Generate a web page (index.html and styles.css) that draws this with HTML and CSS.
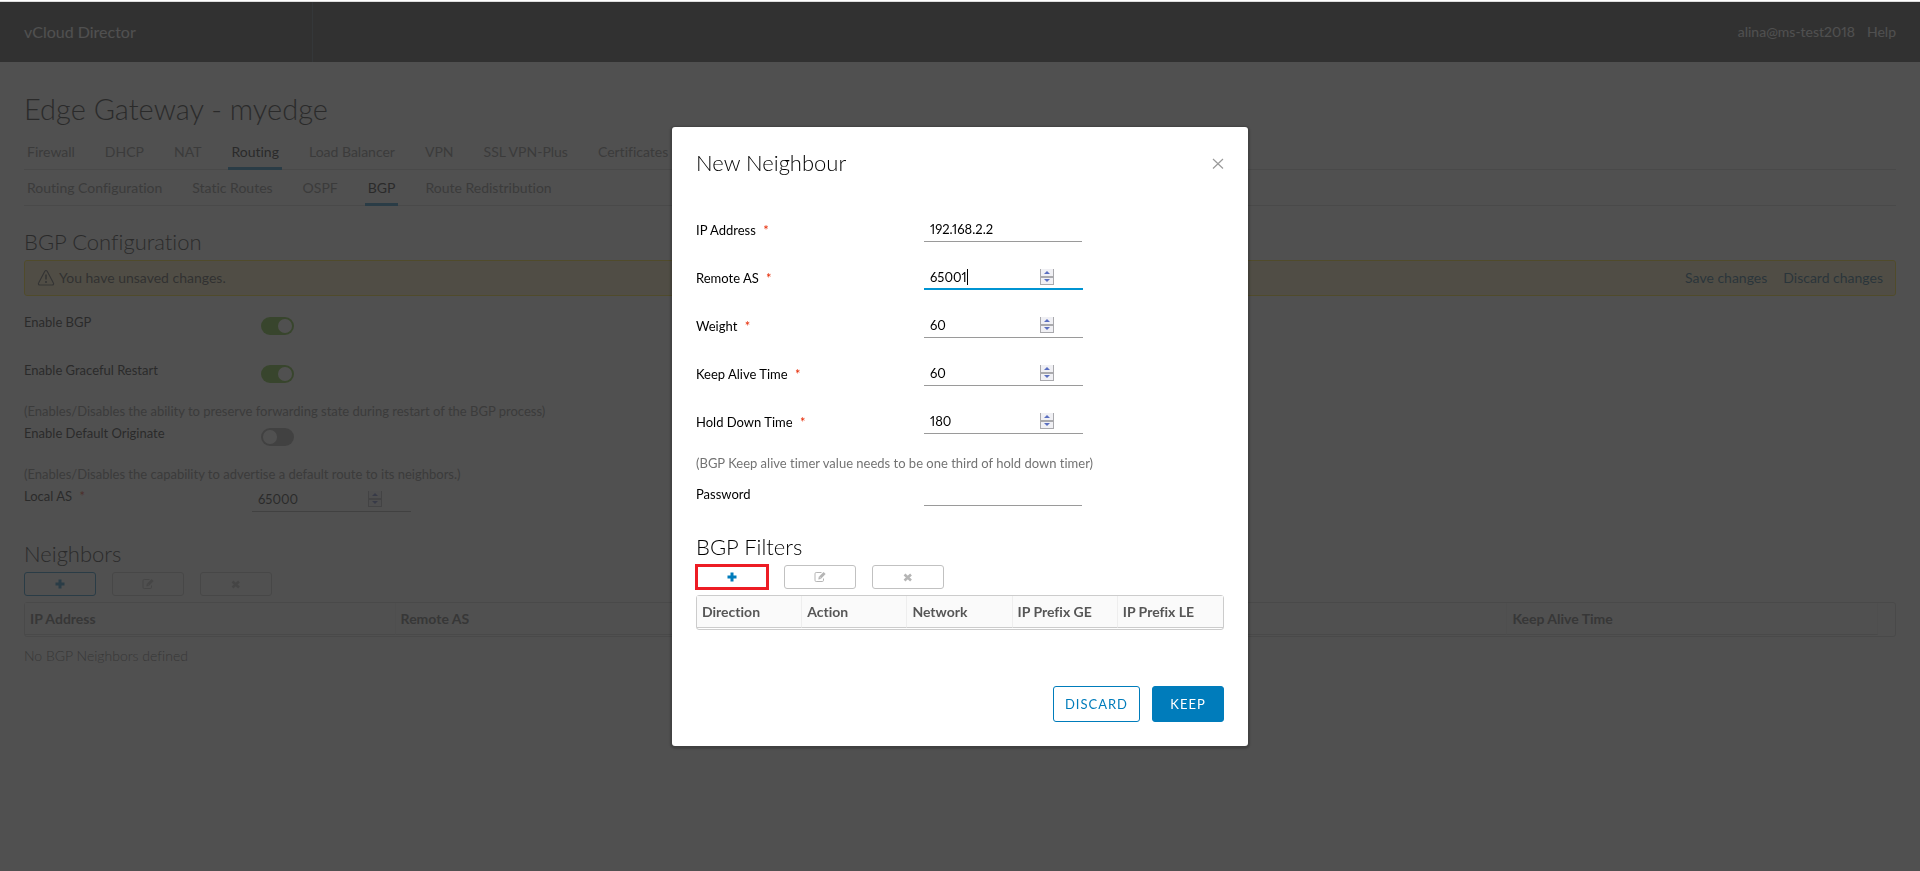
FILE: index.html
```html
<!DOCTYPE html>
<html lang="en">
  <head>
    <meta charset="utf-8">
    <title>vCloud Director</title>
    <link rel="stylesheet" href="styles.css">
  </head>
  <body>
    <svg class="sprite" aria-hidden="true">
      <symbol id="icon-plus" viewBox="0 0 12 12">
        <path d="M4.500 1.500h3v3h3v3h-3v3h-3v-3h-3v-3h3z" fill="currentColor"/>
      </symbol>
      <symbol id="icon-edit" viewBox="0 0 12 12">
        <path d="M7.500 1.500H2.200A1.200 1.200 0 0 0 1 2.700v6.600a1.200 1.200 0 0 0 1.200 1.200h6.100a1.200 1.200 0 0 0 1.200-1.200V7.500" fill="none" stroke="currentColor"/>
        <path d="M4.300 8.500l.5-2.700L9.600 1l2 2-4.800 4.900z" fill="currentColor"/>
        <path d="M5.600 6l1.200 1.200" stroke="#fff" stroke-width=".7"/>
      </symbol>
      <symbol id="icon-remove" viewBox="0 0 12 12">
        <path d="M2.500 3.500l6.500 6M9 3.500l-6.500 6" stroke="currentColor" stroke-width="2.600"/>
      </symbol>
    </svg>

    <header class="header">
      <div class="brand">vCloud Director</div>
      <div class="header-links">
        <a href="#">alina@ms-test2018</a>
        <a href="#">Help</a>
      </div>
    </header>

    <main class="content">
      <h1>Edge Gateway - myedge</h1>
      <nav class="tabs">
        <a href="#">Firewall</a>
        <a href="#">DHCP</a>
        <a href="#">NAT</a>
        <a href="#" class="active">Routing</a>
        <a href="#">Load Balancer</a>
        <a href="#">VPN</a>
        <a href="#">SSL VPN-Plus</a>
        <a href="#">Certificates</a>
      </nav>
      <nav class="tabs">
        <a href="#">Routing Configuration</a>
        <a href="#">Static Routes</a>
        <a href="#">OSPF</a>
        <a href="#" class="active">BGP</a>
        <a href="#">Route Redistribution</a>
      </nav>

      <h2 class="config-title">BGP Configuration</h2>
      <div class="alert">
        <svg class="alert-icon" viewBox="0 0 18 18">
          <path d="M7.800 2.200L1.600 14a1.300 1.300 0 0 0 1.200 2h12.400a1.300 1.300 0 0 0 1.200-2L10.200 2.200a1.400 1.400 0 0 0-2.400 0z" fill="none" stroke="currentColor" stroke-width="1.200"/>
          <path d="M9 5.500v5M9 12v2" stroke="currentColor" stroke-width="1.600"/>
        </svg>
        <span class="alert-text">You have unsaved changes.</span>
        <a href="#">Save changes</a>
        <a href="#">Discard changes</a>
      </div>

      <form class="config">
        <div class="config-row">
          <label for="enable-bgp">Enable BGP</label>
          <input type="checkbox" class="toggle" id="enable-bgp" checked>
        </div>
        <div class="config-row">
          <label for="graceful">Enable Graceful Restart</label>
          <input type="checkbox" class="toggle" id="graceful" checked>
        </div>
        <p class="config-hint">(Enables/Disables the ability to preserve forwarding state during restart of the BGP process)</p>
        <div class="config-row">
          <label for="originate">Enable Default Originate</label>
          <input type="checkbox" class="toggle" id="originate">
        </div>
        <p class="config-hint">(Enables/Disables the capability to advertise a default route to its neighbors.)</p>
        <div class="config-row">
          <label for="local-as">Local AS <span class="required">*</span></label>
          <div class="field number">
            <input type="number" id="local-as" value="65000">
            <span class="spinner"><button type="button" class="up" aria-label="Increase"></button><button type="button" class="down" aria-label="Decrease"></button></span>
          </div>
        </div>
      </form>

      <h2 class="neighbors-title">Neighbors</h2>
      <div class="toolbar">
        <button class="tool add" aria-label="Add"><svg><use href="#icon-plus"/></svg></button>
        <button class="tool" aria-label="Edit" disabled><svg><use href="#icon-edit"/></svg></button>
        <button class="tool" aria-label="Remove" disabled><svg><use href="#icon-remove"/></svg></button>
      </div>
      <div class="grid">
        <table>
          <thead>
            <tr><th>IP Address</th><th>Remote AS</th><th>Weight</th><th>Hold Down Time</th><th>Keep Alive Time</th><td class="gutter"></td></tr>
          </thead>
        </table>
      </div>
      <p class="empty">No BGP Neighbors defined</p>
    </main>

    <div class="backdrop">
      <div class="modal" role="dialog" aria-labelledby="modal-title">
        <div class="modal-header">
          <h2 id="modal-title">New Neighbour</h2>
          <button class="close" aria-label="Close">
            <svg viewBox="0 0 12 12"><path d="M1 2l10 9.500M11 2L1 11.500" stroke="currentColor" stroke-width="1.200"/></svg>
          </button>
        </div>
        <form class="modal-form">
          <div class="form-row">
            <label for="ip">IP Address <span class="required">*</span></label>
            <div class="field"><input type="text" id="ip" value="192.168.2.2"></div>
          </div>
          <div class="form-row">
            <label for="remote-as">Remote AS <span class="required">*</span></label>
            <div class="field number focused">
              <input type="number" id="remote-as" value="65001">
              <span class="caret"></span>
              <span class="spinner"><button type="button" class="up" aria-label="Increase"></button><button type="button" class="down" aria-label="Decrease"></button></span>
            </div>
          </div>
          <div class="form-row">
            <label for="weight">Weight <span class="required">*</span></label>
            <div class="field number">
              <input type="number" id="weight" value="60">
              <span class="spinner"><button type="button" class="up" aria-label="Increase"></button><button type="button" class="down" aria-label="Decrease"></button></span>
            </div>
          </div>
          <div class="form-row">
            <label for="keep-alive">Keep Alive Time <span class="required">*</span></label>
            <div class="field number">
              <input type="number" id="keep-alive" value="60">
              <span class="spinner"><button type="button" class="up" aria-label="Increase"></button><button type="button" class="down" aria-label="Decrease"></button></span>
            </div>
          </div>
          <div class="form-row">
            <label for="hold-down">Hold Down Time <span class="required">*</span></label>
            <div class="field number">
              <input type="number" id="hold-down" value="180">
              <span class="spinner"><button type="button" class="up" aria-label="Increase"></button><button type="button" class="down" aria-label="Decrease"></button></span>
            </div>
          </div>
          <p class="form-hint">(BGP Keep alive timer value needs to be one third of hold down timer)</p>
          <div class="form-row">
            <label for="password">Password</label>
            <div class="field"><input type="password" id="password"></div>
          </div>
        </form>

        <h2 class="filters-title">BGP Filters</h2>
        <div class="toolbar">
          <button class="tool add highlight" aria-label="Add"><svg><use href="#icon-plus"/></svg></button>
          <button class="tool" aria-label="Edit" disabled><svg><use href="#icon-edit"/></svg></button>
          <button class="tool" aria-label="Remove" disabled><svg><use href="#icon-remove"/></svg></button>
        </div>
        <div class="grid">
          <table>
            <thead>
              <tr><th>Direction</th><th>Action</th><th>Network</th><th>IP Prefix GE</th><th>IP Prefix LE</th></tr>
            </thead>
          </table>
        </div>

        <div class="modal-footer">
          <button class="btn">DISCARD</button>
          <button class="btn btn-primary">KEEP</button>
        </div>
      </div>
    </div>
  </body>
</html>
```

FILE: styles.css
```css
* {
  box-sizing: border-box;
}
body {
  margin: 0;
  min-height: 100vh;
  border-top: 1px solid #fff;
  background-color: #fafafa;
  color: #000;
  font-family: Lato, "Open Sans", sans-serif;
  font-size: 13px;
  font-variant-ligatures: none;
  font-variant-numeric: proportional-nums;
  line-height: 18px;
}
h1, h2, p {
  margin: 0;
}
h1 {
  font-size: 29px;
  font-weight: 300;
  line-height: 36px;
}
h2 {
  font-size: 22px;
  font-weight: 300;
  line-height: 24px;
}
a {
  color: inherit;
  text-decoration: none;
}
button, input {
  margin: 0;
  padding: 0;
  border: 0;
  background: none;
  color: inherit;
  font: inherit;
}
input {
  font-variant-numeric: proportional-nums;
}
.sprite {
  display: none;
}

/* header */
.header {
  display: flex;
  justify-content: space-between;
  align-items: center;
  height: 61px;
  padding-right: 24px;
  border-top: 1px solid #ddd;
  background-color: #313131;
  color: #fafafa;
  font-size: 14px;
}
.brand {
  display: flex;
  align-items: center;
  width: 313px;
  height: 60px;
  padding-left: 24px;
  border-right: 1px solid #485969;
  font-size: 16px;
}
.header-links {
  display: flex;
  gap: 12px;
}

/* page */
.content {
  padding: 29px 24px 0;
}
.tabs {
  display: flex;
  gap: 24px;
  height: 36px;
  border-bottom: 1px solid #ccc;
  color: #737373;
  font-size: 14px;
  line-height: 36px;
}
h1 + .tabs {
  margin-top: 7px;
}
.tabs a {
  height: 36px;
  padding: 0 3px;
}
.tabs .active {
  border-bottom: 3px solid #007cbb;
  color: #000;
}
.config-title {
  margin-top: 24px;
}
.alert {
  display: flex;
  align-items: center;
  gap: 16px;
  height: 36px;
  margin-top: 6px;
  padding: 0 12px;
  border: 1px solid #ffdc0b;
  border-radius: 3px;
  background-color: #feecb5;
  color: #004a70;
  font-size: 14px;
}
.alert-icon {
  width: 18px;
  height: 18px;
  margin-right: -12px;
  color: #444;
}
.alert-text {
  flex: 1;
  color: #313131;
}
.config {
  margin-top: 17px;
}
.config-row {
  display: flex;
  align-items: flex-start;
}
.config-row + .config-row {
  margin-top: 26px;
}
.config-row label {
  width: 228px;
}
.config-row .field {
  margin-top: 1px;
}
.config-hint {
  margin: 19px 0 4px;
  color: #737373;
}
.required {
  margin-left: 4px;
  color: #e62700;
}
.toggle {
  appearance: none;
  width: 33px;
  height: 18px;
  margin: 4px 0 0 9px;
  padding: 2px;
  border-radius: 9px;
  background-color: #9a9a9a;
}
.toggle::before {
  content: "";
  display: block;
  width: 14px;
  height: 14px;
  border-radius: 7px;
  background-color: #fff;
}
.toggle:checked {
  background-color: #60b515;
}
.toggle:checked::before {
  margin-left: 15px;
}

/* text and number fields */
.field {
  display: flex;
  align-items: flex-start;
  width: 158px;
  height: 24px;
  padding-left: 6px;
  border-bottom: 1px solid #9a9a9a;
}
.number {
  width: 159px;
}
.field input {
  width: 110px;
  height: 22px;
  outline: 0;
  appearance: textfield;
}
.field input::-webkit-inner-spin-button {
  appearance: none;
}
.focused {
  position: relative;
  border-bottom: 2px solid #0094d2;
}
.caret {
  position: absolute;
  top: 3px;
  left: 43px;
  width: 1px;
  height: 16px;
  background-color: #000;
}
.spinner {
  display: flex;
  flex-direction: column;
  width: 14px;
  height: 16px;
  margin-top: 3px;
  border: 1px solid #a9a9ad;
  border-top: 0;
  background-color: #f0f0f4;
}
.spinner button {
  display: flex;
  flex: 1;
  justify-content: center;
  align-items: center;
}
.spinner .down {
  border-top: 2px solid #a9a9ad;
}
.spinner button::before {
  content: "";
  border: 3px solid transparent;
}
.spinner .up::before {
  border-top: 0;
  border-bottom-color: #5a6fc0;
}
.spinner .down::before {
  border-bottom: 0;
  border-top-color: #5a6fc0;
}

.neighbors-title {
  margin-top: 30px;
}
.toolbar {
  display: flex;
  gap: 16px;
  margin: 6px 0;
}
.tool {
  display: flex;
  justify-content: center;
  align-items: center;
  width: 72px;
  height: 24px;
  border: 1px solid #c1c1c1;
  border-radius: 3px;
  color: #b5b5b5;
}
.tool svg {
  width: 12px;
  height: 12px;
}
.add {
  border-color: #007cbb;
  color: #007cbb;
}
.highlight {
  border-radius: 0;
  outline: 3px solid #ed1c24;
  outline-offset: -2px;
}
.grid {
  padding-bottom: 1px;
  border: 1px solid #ccc;
  border-radius: 3px;
  background-color: #fff;
}
.grid table {
  width: 100%;
  border-spacing: 0;
  table-layout: fixed;
}
.grid th {
  height: 32px;
  padding: 0 5px;
  border-right: 1px solid #eee;
  border-bottom: 1px solid #ccc;
  background-color: #fafafa;
  color: #565656;
  font-size: 14px;
  font-weight: bold;
  text-align: left;
}
.grid th:last-child {
  border-right: 0;
}
.gutter {
  width: 17px;
  padding: 0;
}
.empty {
  margin-top: 10px;
  color: #565656;
  font-size: 14px;
  font-weight: 300;
}

/* dialog */
.backdrop {
  position: fixed;
  inset: 2px 0 0;
  display: flex;
  justify-content: center;
  align-items: center;
  background-color: rgba(49, 49, 49, 0.85);
}
.modal {
  width: 576px;
  padding: 24px;
  border-radius: 3px;
  background-color: #fff;
  box-shadow: 0 1px 2px 2px rgba(0, 0, 0, 0.2);
}
.modal-header {
  display: flex;
  justify-content: space-between;
  align-items: center;
  margin-bottom: 43px;
}
.close {
  display: flex;
  color: #9a9a9a;
}
.close svg {
  width: 12px;
  height: 12px;
}
.form-row {
  display: flex;
  align-items: center;
}
.form-row + .form-row {
  margin-top: 24px;
}
.form-row label {
  width: 228px;
}
.form-hint {
  margin: 17px 0 7px;
  color: #737373;
  line-height: 24px;
}
.filters-title {
  margin-top: 29px;
}
.modal-footer {
  display: flex;
  justify-content: flex-end;
  gap: 12px;
  margin-top: 56px;
}
.btn {
  min-width: 72px;
  height: 36px;
  padding: 0 11px;
  border: 1px solid #007cbb;
  border-radius: 3px;
  color: #007cbb;
  font-size: 13px;
  letter-spacing: 1px;
}
.btn-primary {
  background-color: #007cbb;
  color: #fff;
}
```
